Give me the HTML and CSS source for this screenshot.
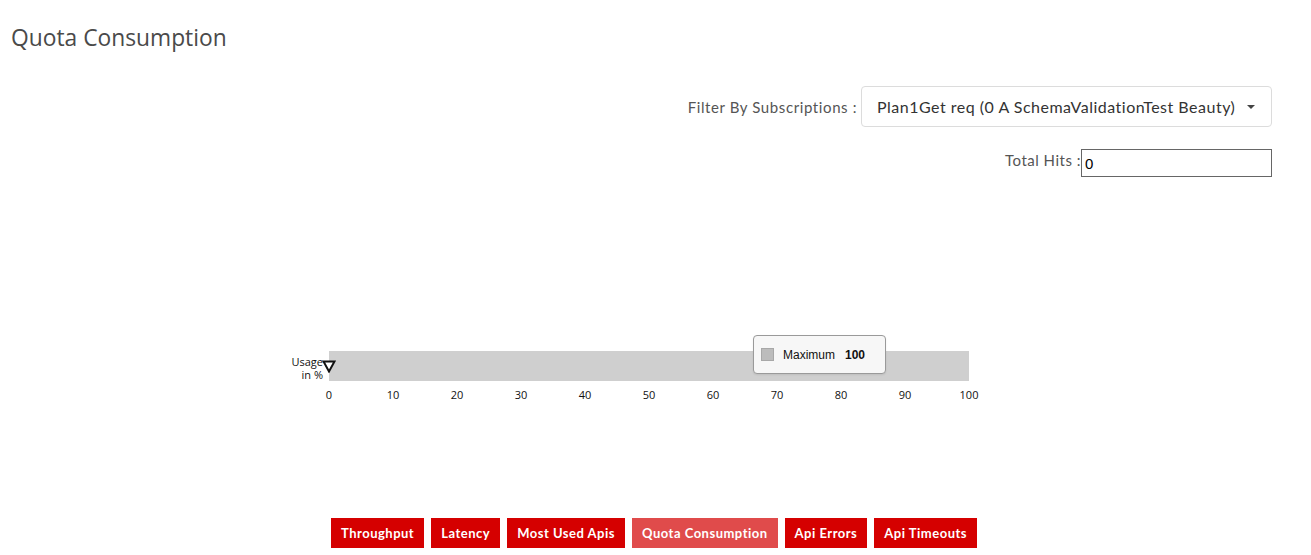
FILE: index.html
```html
<!DOCTYPE html>
<html>
<head>
<meta charset="utf-8">
<link rel="stylesheet" href="styles.css">
</head>
<body>
<div class="page">
  <h1 class="title">Quota Consumption</h1>
  <div class="filters">
    <div class="filter-row">
      <span class="label">Filter By Subscriptions :</span>
      <div class="select">
        <span>Plan1Get req (0 A SchemaValidationTest Beauty)</span>
        <span class="caret"></span>
      </div>
    </div>
    <div class="hits-row">
      <span class="label small">Total Hits :</span>
      <input class="hits" type="text" value="0">
    </div>
  </div>
  <div class="chart">
    <div class="plot">
      <div class="ylabel">Usage<br>in %</div>
      <div class="track">
        <svg class="marker" width="14" height="13" viewBox="0 0 14 13"><polygon points="1.5,1.5 12.5,1.5 7,11.5" fill="#fff" stroke="#111" stroke-width="2" stroke-linejoin="miter"/></svg>
        <div class="bar"></div>
        <div class="tooltip">
          <span class="swatch"></span>
          <span class="tname">Maximum</span>
          <b class="tval">100</b>
        </div>
      </div>
    </div>
    <div class="axis">
      <span>0</span><span>10</span><span>20</span><span>30</span><span>40</span><span>50</span><span>60</span><span>70</span><span>80</span><span>90</span><span>100</span>
    </div>
  </div>
  <div class="tabs">
    <button class="tab">Throughput</button>
    <button class="tab">Latency</button>
    <button class="tab">Most Used Apis</button>
    <button class="tab active">Quota Consumption</button>
    <button class="tab">Api Errors</button>
    <button class="tab">Api Timeouts</button>
  </div>
</div>
</body>
</html>
```
FILE: styles.css
```css
html, body {
  margin: 0;
  padding: 0;
  background: #fff;
}
.page {
  width: 1311px;
  height: 555px;
  box-sizing: border-box;
  padding: 0 39px 0 11px;
  display: flex;
  flex-direction: column;
  font-family: "Lato", "Open Sans", sans-serif;
}
.title {
  margin: 23px 0 0 0;
  font-family: "Open Sans", sans-serif;
  font-weight: 400;
  font-size: 22.8px;
  line-height: 30px;
  color: #4a4a4a;
}
.filters {
  display: flex;
  flex-direction: column;
  align-items: flex-end;
  margin-top: 33px;
}
.filter-row {
  display: flex;
  align-items: center;
  gap: 4px;
}
.label {
  font-size: 15px;
  color: #555;
  letter-spacing: 0.6px;
}
.select {
  width: 411px;
  height: 41px;
  box-sizing: border-box;
  border: 1px solid #dcdcdc;
  border-radius: 4px;
  display: flex;
  align-items: center;
  justify-content: space-between;
  padding: 0 16px 0 15px;
  font-size: 16px;
  color: #333;
  letter-spacing: 0.5px;
}
.caret {
  width: 0;
  height: 0;
  border-left: 4px solid transparent;
  border-right: 4px solid transparent;
  border-top: 4px solid #444;
}
.hits-row {
  display: flex;
  align-items: flex-start;
  margin-top: 22px;
}
.label.small {
  font-size: 15px;
  line-height: 20px;
  margin-top: 1px;
  letter-spacing: 0.5px;
}
.hits {
  width: 191px;
  height: 28px;
  box-sizing: border-box;
  border: 1px solid #666;
  border-radius: 0;
  margin: 0;
  padding: 1px 3px 0;
  font-family: "Liberation Sans", Arial, sans-serif;
  font-size: 15px;
  color: #000;
  outline: none;
}
.chart {
  margin-top: 174px;
  margin-left: 312px;
  width: 660px;
  font-family: "Open Sans", sans-serif;
  font-size: 11px;
  color: #111;
}
.plot {
  display: flex;
  align-items: center;
}
.ylabel {
  width: 0;
  flex: 0 0 0;
  display: flex;
  justify-content: flex-end;
  text-align: right;
  line-height: 12.5px;
  white-space: nowrap;
  margin-top: 5px;
  margin-right: 6px;
}
.track {
  position: relative;
  width: 640px;
  height: 30px;
}
.bar {
  width: 640px;
  height: 30px;
  background: #cfcfcf;
}
.marker {
  position: absolute;
  left: -7px;
  top: 9px;
  z-index: 2;
}
.tooltip {
  position: absolute;
  left: 424px;
  top: -16px;
  width: 133px;
  height: 39px;
  box-sizing: border-box;
  border: 1px solid #9a9a9a;
  border-radius: 4px;
  background: #f7f7f7;
  display: flex;
  align-items: center;
  padding-left: 7px;
  font-family: "Liberation Sans", Arial, sans-serif;
  font-size: 12px;
  color: #111;
  box-shadow: 0 1px 2px rgba(0,0,0,0.08);
}
.swatch {
  width: 11px;
  height: 11px;
  background: #bcbcbc;
  border: 1px solid #a8a8a8;
  margin-right: 9px;
}
.tname { margin-right: 10px; }
.tval { font-weight: bold; }
.axis {
  display: flex;
  justify-content: space-between;
  width: 660px;
  margin-left: -4px;
  margin-top: 7px;
  line-height: 14px;
}
.axis span {
  width: 20px;
  text-align: center;
}
.tabs {
  margin-top: auto;
  margin-bottom: 7px;
  display: flex;
  justify-content: center;
  gap: 7px;
  padding-left: 25px;
}
.tab {
  height: 30px;
  border: 0;
  margin: 0;
  padding: 0 10px;
  background: #d50000;
  color: #fff;
  font-family: "Lato", sans-serif;
  font-weight: 700;
  font-size: 13px;
  letter-spacing: 0.5px;
}
.tab.active {
  background: #e04b4b;
}
```
